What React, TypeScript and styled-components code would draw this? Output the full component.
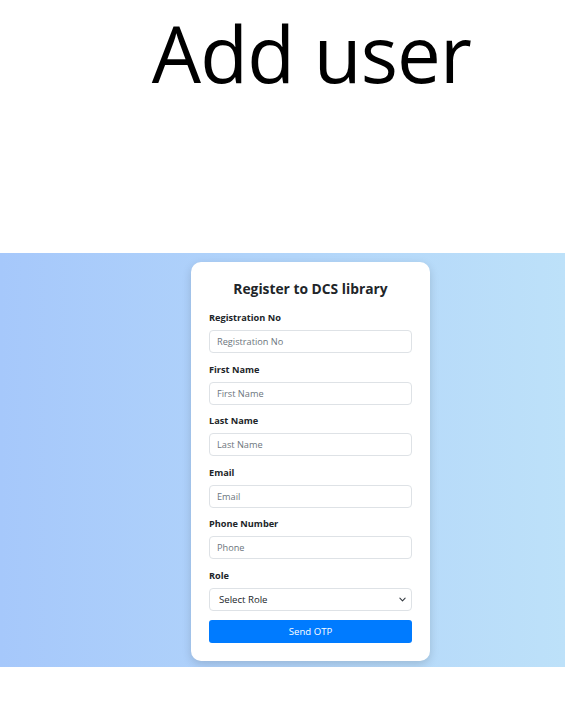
import React from "react";
import styled, { createGlobalStyle } from "styled-components";

const Global = createGlobalStyle`
  html, body { margin: 0; padding: 0; background: #fff; }
  * { box-sizing: border-box; }
  body { font-family: "Open Sans", "Noto Sans", sans-serif; }
`;

const Header = styled.div`
  height: 253px;
  padding: 3px 0 0 58px;
  text-align: center;
`;

const Title = styled.h1`
  margin: 0;
  font-family: "Open Sans", sans-serif;
  font-weight: 400;
  font-size: 78px;
  line-height: 100px;
  color: #000;
  letter-spacing: -0.8px;
`;

const Band = styled.section`
  background: linear-gradient(to right, #a6c8fb, #bde1f9);
  display: flex;
  justify-content: center;
  padding: 9px 0 6px 56px;
`;

const Card = styled.form`
  width: 239px;
  background: #fff;
  border-radius: 10px;
  box-shadow: 0 3px 10px rgba(0, 0, 0, 0.15);
  padding: 16px 18px 18px;
  display: flex;
  flex-direction: column;
  font-family: "Open Sans", sans-serif;
`;

const CardTitle = styled.h2`
  margin: 0 0 11px;
  text-align: center;
  font-size: 13.8px;
  font-weight: 700;
  color: #212529;
  line-height: 22px;
`;

const Field = styled.div`
  display: flex;
  flex-direction: column;
  margin-bottom: 9.5px;
`;

const Label = styled.label`
  font-size: 9.2px;
  font-weight: 700;
  color: #212529;
  line-height: 14px;
  margin-bottom: 5px;
`;

const Input = styled.input`
  height: 23px;
  border: 1px solid #dee2e6;
  border-radius: 4px;
  padding: 0 7px;
  font-family: inherit;
  font-size: 9.2px;
  color: #212529;
  &::placeholder { color: #6c757d; }
`;

const SelectBox = styled.div`
  height: 23px;
  border: 1px solid #dee2e6;
  border-radius: 4px;
  padding: 0 5px 0 9px;
  display: flex;
  align-items: center;
  justify-content: space-between;
  font-size: 9.6px;
  color: #212529;
`;

const Button = styled.button`
  margin-top: 0;
  height: 23px;
  border: none;
  border-radius: 3px;
  background: #007bff;
  color: #fff;
  font-family: inherit;
  font-size: 9.6px;
`;

const fields = [
  ["Registration No", "Registration No"],
  ["First Name", "First Name"],
  ["Last Name", "Last Name"],
  ["Email", "Email"],
  ["Phone Number", "Phone"],
];

export default function App() {
  return (
    <>
      <Global />
      <Header>
        <Title>Add user</Title>
      </Header>
      <Band>
        <Card onSubmit={(e) => e.preventDefault()}>
          <CardTitle>Register to DCS library</CardTitle>
          {fields.map(([l, p]) => (
            <Field key={l}>
              <Label>{l}</Label>
              <Input placeholder={p} />
            </Field>
          ))}
          <Field>
            <Label>Role</Label>
            <SelectBox>
              <span>Select Role</span>
              <svg width="7" height="7" viewBox="0 0 16 16">
                <path d="M2 5l6 6 6-6" fill="none" stroke="#343a40" strokeWidth="2.5" strokeLinecap="round" strokeLinejoin="round" />
              </svg>
            </SelectBox>
          </Field>
          <Button type="submit">Send OTP</Button>
        </Card>
      </Band>
    </>
  );
}
